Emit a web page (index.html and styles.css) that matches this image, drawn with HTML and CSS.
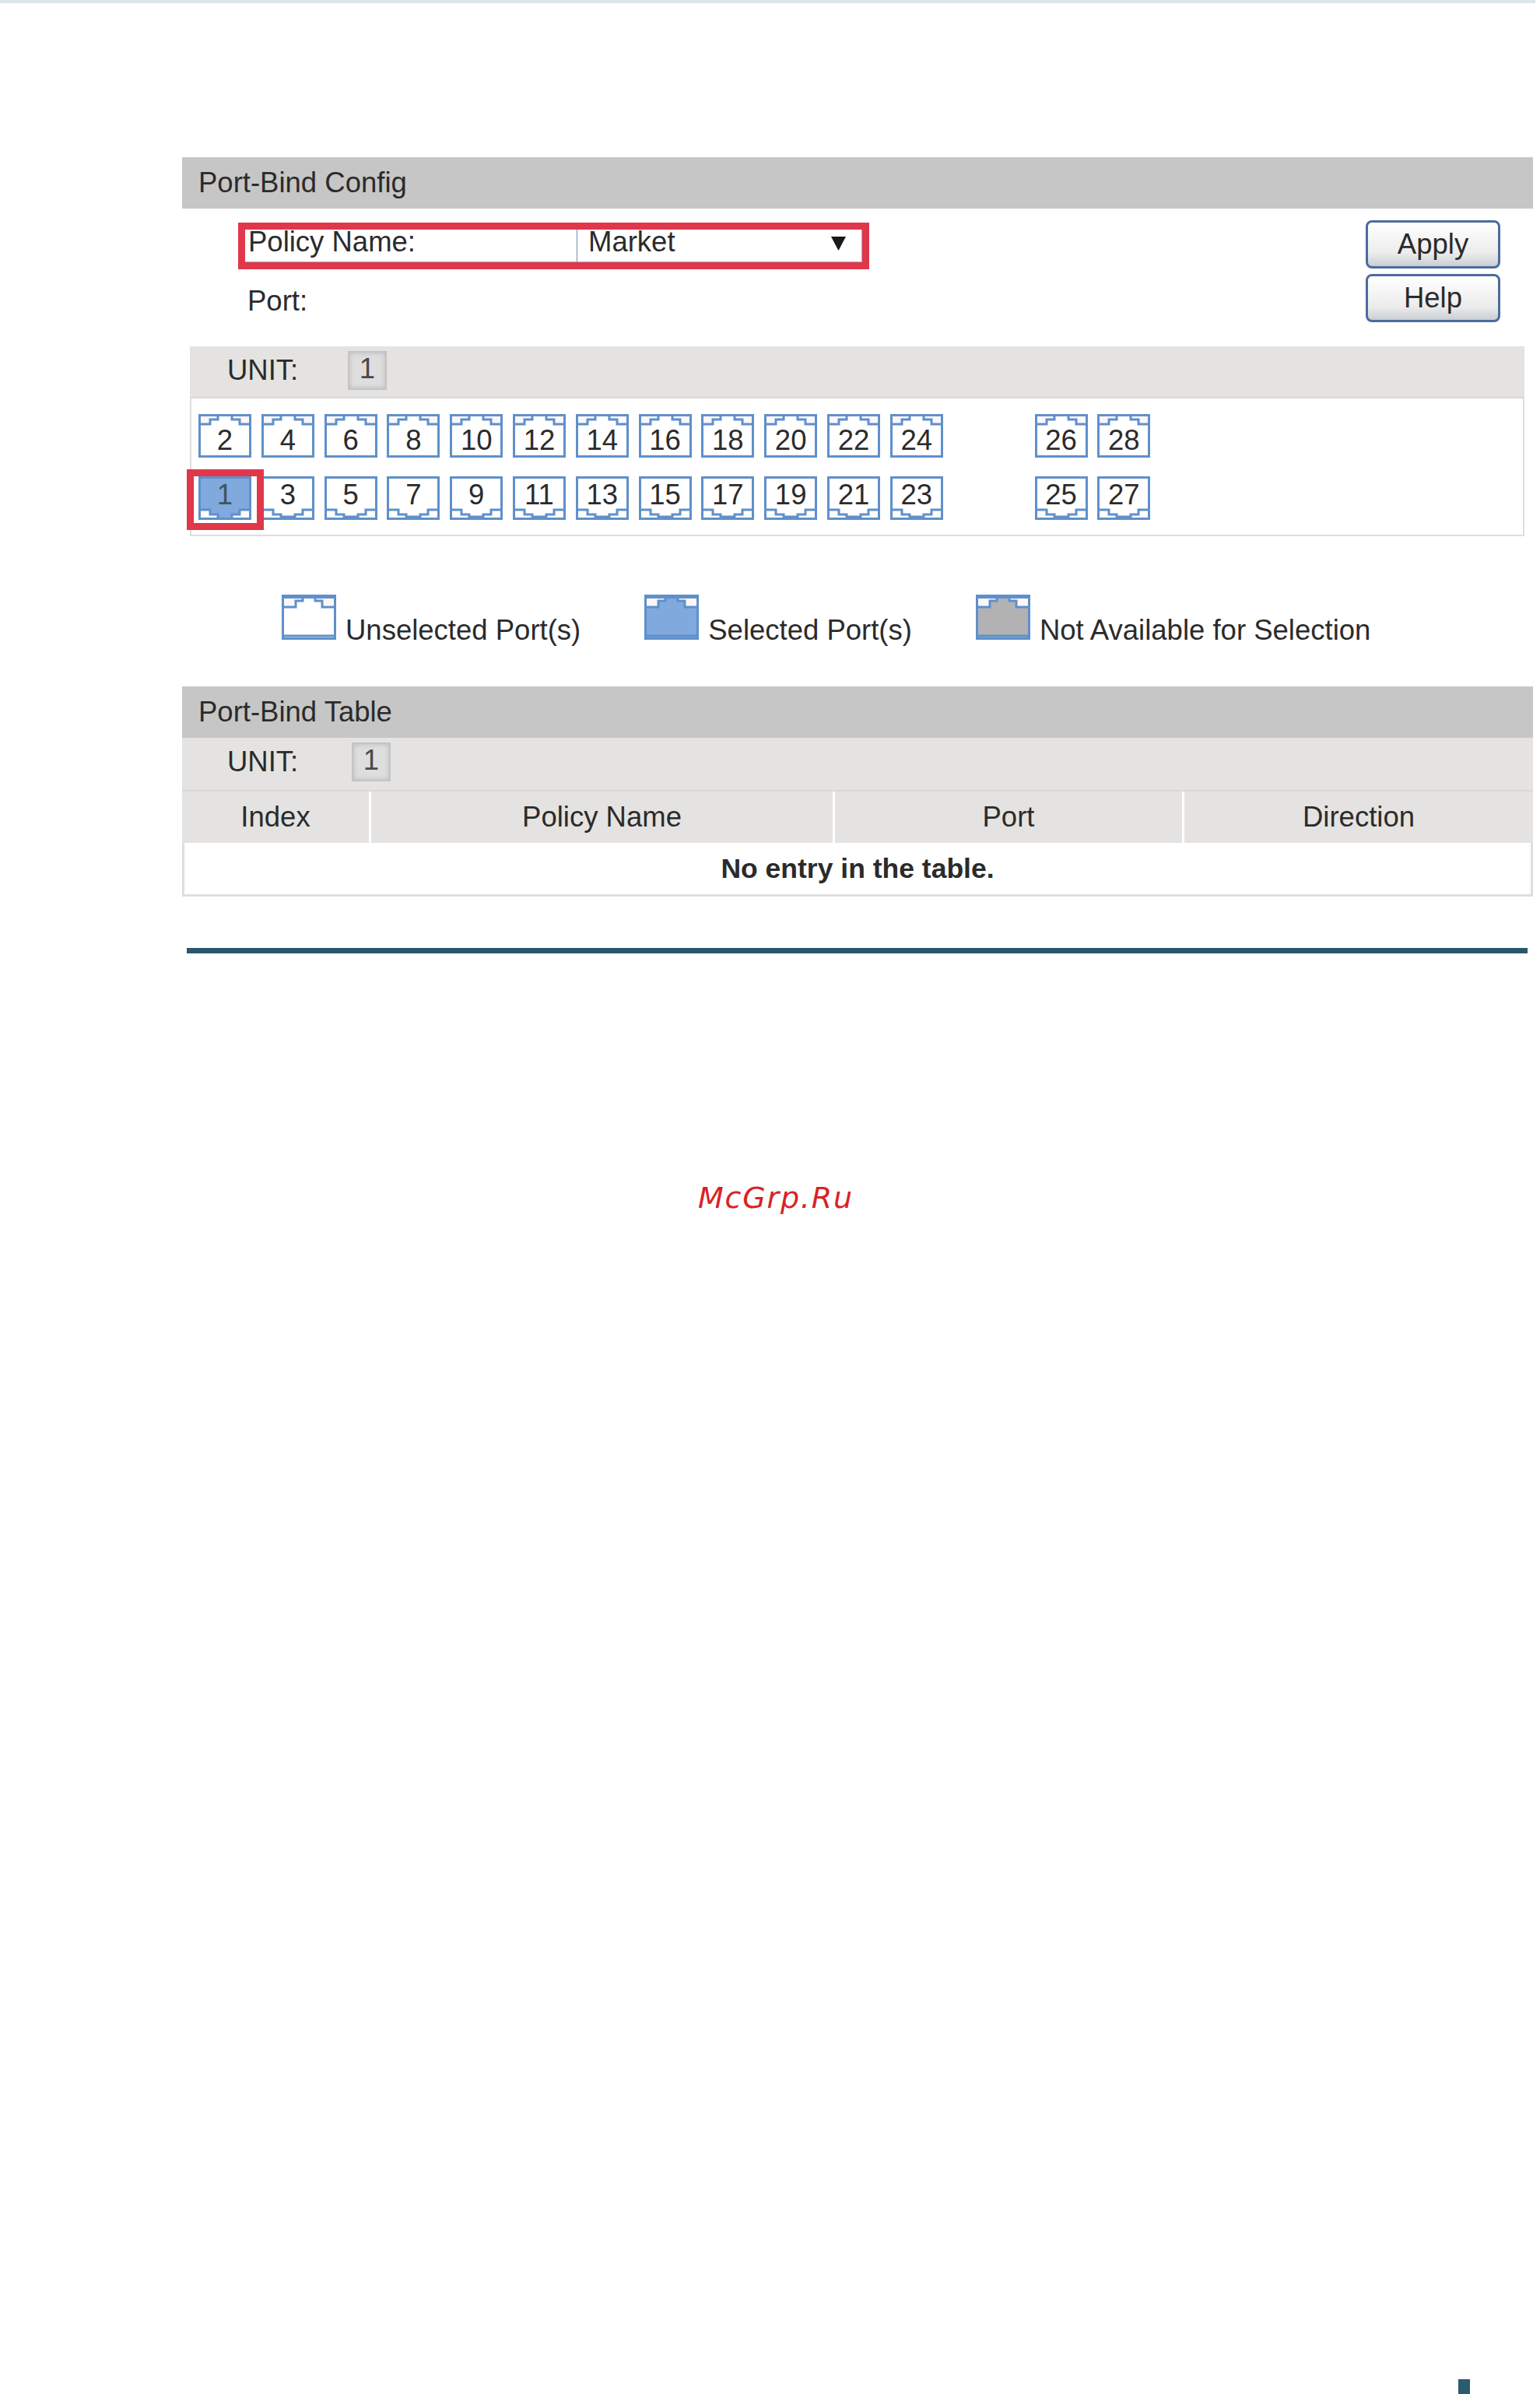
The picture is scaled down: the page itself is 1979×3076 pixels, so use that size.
FILE: index.html
```html
<!DOCTYPE html>
<html lang="en">

<head>
  <meta charset="UTF-8">
  <meta name="viewport" content="width=device-width, initial-scale=1.0">
  <title>Port-Bind Config</title>

  <link rel="stylesheet" href="styles.css">
</head>

<body>
  <!-- shapes shared by the port buttons and the legend -->
  <svg class="defs" width="0" height="0">
    <symbol id="port-up" viewBox="0 0 68 56">
      <path class="notch" d="M2 2 H25 V7 H15 V13 H2 Z M66 2 H43 V7 H53 V13 H66 Z" />
      <path class="line" d="M1.5 1.5 H66.5 V54.5 H1.5 Z M1.5 13 H15 V7 H25 V1.5 M43 1.5 V7 H53 V13 H66.5" />
    </symbol>
    <symbol id="port-down" viewBox="0 0 68 56">
      <path class="line" d="M1.5 1.5 H66.5 V54.5 H1.5 Z M1.5 43 H15 V49 H25 V54.5 M43 54.5 V49 H53 V43 H66.5" />
      <path class="line-thick" d="M25 52.5 H43" />
    </symbol>
    <symbol id="port-selected" viewBox="0 0 68 56">
      <path class="fill-blue" d="M1.5 1.5 H66.5 V54.5 H1.5 Z" />
      <path class="fill-white" d="M3 43 H15 V49 H25 V53 H3 Z M65 43 H53 V49 H43 V53 H65 Z" />
      <path class="line" d="M1.5 1.5 H66.5 V54.5 H1.5 Z M1.5 43 H15 V49 H25 V54.5 M43 54.5 V49 H53 V43 H66.5" />
    </symbol>
    <symbol id="legend-port" viewBox="0 0 70 58">
      <path class="line-thick" d="M1.5 3 H68.5" />
      <path class="notch" d="M3 5 H27 V8 H18 V16 H3 Z M67 5 H43 V8 H52 V16 H67 Z" />
      <path class="line" d="M1.5 1.5 H68.5 V56.5 H1.5 Z M1.5 16 H18 V8 H27 V4 M43 4 V8 H52 V16 H68.5 M1.5 53 H68.5" />
    </symbol>
  </svg>

  <div class="top-bar"></div>

  <section class="section first-section">
    <h2 class="section-title">Port-Bind Config</h2>

    <div class="config-row">
      <div class="config-fields">
        <div class="policy-box">
          <div class="policy-label">Policy Name:</div>
          <div class="policy-select">
            <span>Market</span>
            <svg class="select-arrow" width="19" height="18" viewBox="0 0 19 18">
              <path d="M0 0 H19 L9.5 18 Z" />
            </svg>
          </div>
        </div>
        <div class="port-label">Port:</div>
      </div>
      <div class="config-buttons">
        <button type="button" class="btn">Apply</button>
        <button type="button" class="btn">Help</button>
      </div>
    </div>

    <div class="unit-bar unit-bar-config">
      <span class="unit-label">UNIT:</span>
      <span class="unit-chip">1</span>
    </div>

    <div class="port-panel">
      <div class="port-row">
        <div class="port"><svg><use href="#port-up" /></svg><span>2</span></div>
        <div class="port"><svg><use href="#port-up" /></svg><span>4</span></div>
        <div class="port"><svg><use href="#port-up" /></svg><span>6</span></div>
        <div class="port"><svg><use href="#port-up" /></svg><span>8</span></div>
        <div class="port"><svg><use href="#port-up" /></svg><span>10</span></div>
        <div class="port"><svg><use href="#port-up" /></svg><span>12</span></div>
        <div class="port"><svg><use href="#port-up" /></svg><span>14</span></div>
        <div class="port"><svg><use href="#port-up" /></svg><span>16</span></div>
        <div class="port"><svg><use href="#port-up" /></svg><span>18</span></div>
        <div class="port"><svg><use href="#port-up" /></svg><span>20</span></div>
        <div class="port"><svg><use href="#port-up" /></svg><span>22</span></div>
        <div class="port"><svg><use href="#port-up" /></svg><span>24</span></div>
        <div class="port port-gap"><svg><use href="#port-up" /></svg><span>26</span></div>
        <div class="port"><svg><use href="#port-up" /></svg><span>28</span></div>
      </div>
      <div class="port-row port-row-down">
        <div class="port port-selected"><svg><use href="#port-selected" /></svg><span>1</span></div>
        <div class="port"><svg><use href="#port-down" /></svg><span>3</span></div>
        <div class="port"><svg><use href="#port-down" /></svg><span>5</span></div>
        <div class="port"><svg><use href="#port-down" /></svg><span>7</span></div>
        <div class="port"><svg><use href="#port-down" /></svg><span>9</span></div>
        <div class="port"><svg><use href="#port-down" /></svg><span>11</span></div>
        <div class="port"><svg><use href="#port-down" /></svg><span>13</span></div>
        <div class="port"><svg><use href="#port-down" /></svg><span>15</span></div>
        <div class="port"><svg><use href="#port-down" /></svg><span>17</span></div>
        <div class="port"><svg><use href="#port-down" /></svg><span>19</span></div>
        <div class="port"><svg><use href="#port-down" /></svg><span>21</span></div>
        <div class="port"><svg><use href="#port-down" /></svg><span>23</span></div>
        <div class="port port-gap"><svg><use href="#port-down" /></svg><span>25</span></div>
        <div class="port"><svg><use href="#port-down" /></svg><span>27</span></div>
      </div>
    </div>

    <div class="legend">
      <div class="legend-item">
        <svg class="legend-icon"><use href="#legend-port" /></svg>
        <span>Unselected Port(s)</span>
      </div>
      <div class="legend-item">
        <svg class="legend-icon legend-selected"><use href="#legend-port" /></svg>
        <span>Selected Port(s)</span>
      </div>
      <div class="legend-item">
        <svg class="legend-icon legend-disabled"><use href="#legend-port" /></svg>
        <span>Not Available for Selection</span>
      </div>
    </div>
  </section>

  <section class="section">
    <h2 class="section-title">Port-Bind Table</h2>
    <div class="unit-bar unit-bar-table">
      <span class="unit-label">UNIT:</span>
      <span class="unit-chip">1</span>
    </div>
    <table class="bind-table">
      <thead>
        <tr>
          <th class="col-index">Index</th>
          <th class="col-policy">Policy Name</th>
          <th class="col-port">Port</th>
          <th>Direction</th>
        </tr>
      </thead>
      <tbody>
        <tr>
          <td colspan="4">No entry in the table.</td>
        </tr>
      </tbody>
    </table>
  </section>

  <div class="page-rule"></div>

  <div class="watermark">McGrp.Ru</div>

  <div class="page-mark"></div>
</body>

</html>
```

FILE: styles.css
```css
body {
  display: flex;
  flex-direction: column;
  margin: 0;
  min-height: 3076px;
  background-color: #ffffff;
  color: #2b2b2b;
  font-family: "Liberation Sans", Arial, sans-serif;
  font-size: 36.5px;
  line-height: 40px;
}

.defs {
  position: absolute;
}

.top-bar {
  width: 1973px;
  height: 4px;
  background-color: #dbe5ea;
}

.section {
  width: 1736px;
  margin-left: 234px;
}

.first-section {
  margin-top: 198px;
}

.section-title {
  margin: 0;
  padding-left: 21px;
  height: 66px;
  background-color: #c6c6c6;
  font-size: 36.5px;
  font-weight: normal;
  line-height: 65px;
}

/* policy row and buttons */
.config-row {
  display: flex;
  justify-content: space-between;
  padding: 15px 42px 0 72px;
}

.policy-box {
  display: flex;
  box-sizing: border-box;
  margin-top: 3px;
  width: 811px;
  height: 60px;
  border: 9px solid #e0374b;
  line-height: 32px;
}

.policy-label {
  box-sizing: border-box;
  padding-left: 4px;
  width: 426px;
  border-bottom: 1px solid #9db3cc;
}

.policy-select {
  display: flex;
  flex: 1;
  justify-content: space-between;
  padding: 0 20px 0 14px;
  border-left: 1px solid #6d8bb0;
  border-right: 1px solid #9db3cc;
  border-bottom: 1px solid #9db3cc;
}

.select-arrow {
  margin-top: 9px;
  fill: #1a1a1a;
}

.port-label {
  margin: 21px 0 0 12px;
}

.config-buttons {
  display: flex;
  flex-direction: column;
  gap: 7px;
}

.btn {
  box-sizing: border-box;
  padding: 0;
  width: 173px;
  height: 62px;
  border: 3px solid #4c6c9c;
  border-radius: 8px;
  background: linear-gradient(#ffffff, #ececec 70%, #c9cdd3);
  color: #2b2b2b;
  font-family: inherit;
  font-size: 36.5px;
}

/* unit bars */
.unit-bar {
  display: flex;
  box-sizing: border-box;
  height: 68px;
  background-color: #e4e3e1;
  border-bottom: 2px solid #d9d9d7;
}

.unit-bar-config {
  margin: 31px 11px 0 10px;
  padding-left: 48px;
  height: 67px;
}

.unit-bar-table {
  padding-left: 58px;
  height: 69px;
}

.unit-label {
  margin-top: 11px;
  width: 155px;
}

.unit-bar-table .unit-label {
  width: 160px;
}

.unit-chip {
  box-sizing: border-box;
  margin-top: 6px;
  width: 50px;
  height: 50px;
  border: 2px solid #c4c4c4;
  background-color: #dedede;
  box-shadow: inset 0 0 6px #b8b8b8;
  color: #4a4a4a;
  line-height: 41px;
  text-align: center;
}

/* port grid */
.port-panel {
  margin: 0 11px 0 10px;
  padding: 20px 0 19px 9px;
  border: 2px solid #dedede;
  border-top: none;
}

.port-row {
  display: flex;
  gap: 12.8px;
}

.port-row-down {
  margin-top: 24px;
}

.port {
  display: grid;
  width: 68px;
  height: 56px;
  line-height: 40px;
  text-align: center;
}

.port svg,
.port span {
  grid-area: 1 / 1;
}

.port svg {
  width: 68px;
  height: 56px;
}

.port span {
  padding-top: 14px;
}

.port-row-down .port span {
  padding-top: 4px;
}

.port-gap {
  margin-left: 105px;
}

.port-selected {
  position: relative;
  color: #3f5560;
}

/* red marker drawn over the selected port */
.port-selected::after {
  content: "";
  position: absolute;
  top: -9px;
  right: -16px;
  bottom: -13px;
  left: -15px;
  border: 9px solid #e0374b;
}

.line {
  fill: none;
  stroke: #5f90cb;
  stroke-width: 3;
}

.line-thick {
  fill: none;
  stroke: #5f90cb;
  stroke-width: 4;
}

.notch {
  fill: #fdf6f7;
}

.fill-blue {
  fill: #80a9dd;
}

.fill-white {
  fill: #ffffff;
}

/* legend */
.legend {
  display: flex;
  align-items: baseline;
  gap: 82px;
  box-sizing: border-box;
  padding: 75px 0 0 128px;
  height: 193px;
}

.legend-item {
  display: flex;
  align-items: baseline;
  gap: 12px;
}

.legend-icon {
  width: 70px;
  height: 58px;
  background-color: #ffffff;
}

.legend-selected {
  background: linear-gradient(#80a9dd, #80a9dd) 2px 2px / 66px 54px no-repeat;
}

.legend-disabled {
  background: linear-gradient(#b2b2b2, #b2b2b2) 2px 2px / 66px 54px no-repeat;
}

/* table */
.bind-table {
  width: 100%;
  border-collapse: separate;
  border-spacing: 0;
  table-layout: fixed;
}

.bind-table th {
  box-sizing: border-box;
  height: 66px;
  padding: 0;
  border-left: 3px solid #ffffff;
  background-color: #e4e3e1;
  font-weight: normal;
}

.bind-table th:first-child {
  border-left: none;
}

.col-index {
  width: 240px;
}

.col-policy {
  width: 596px;
}

.col-port {
  width: 449px;
}

.bind-table td {
  height: 66px;
  padding: 0;
  border: 3px solid #dedede;
  border-top: none;
  font-size: 35.5px;
  font-weight: bold;
  text-align: center;
}

.page-rule {
  margin: 66px 0 0 240px;
  width: 1723px;
  height: 7px;
  background-color: #2a566b;
}

.watermark {
  margin: 294px 0 0 897px;
  color: #d92226;
  font-family: "DejaVu Sans", sans-serif;
  font-size: 38px;
  font-style: italic;
  letter-spacing: 1.8px;
}

.page-mark {
  margin: auto 0 0 1874px;
  width: 15px;
  height: 19px;
  background-color: #2c5a6e;
}
```
